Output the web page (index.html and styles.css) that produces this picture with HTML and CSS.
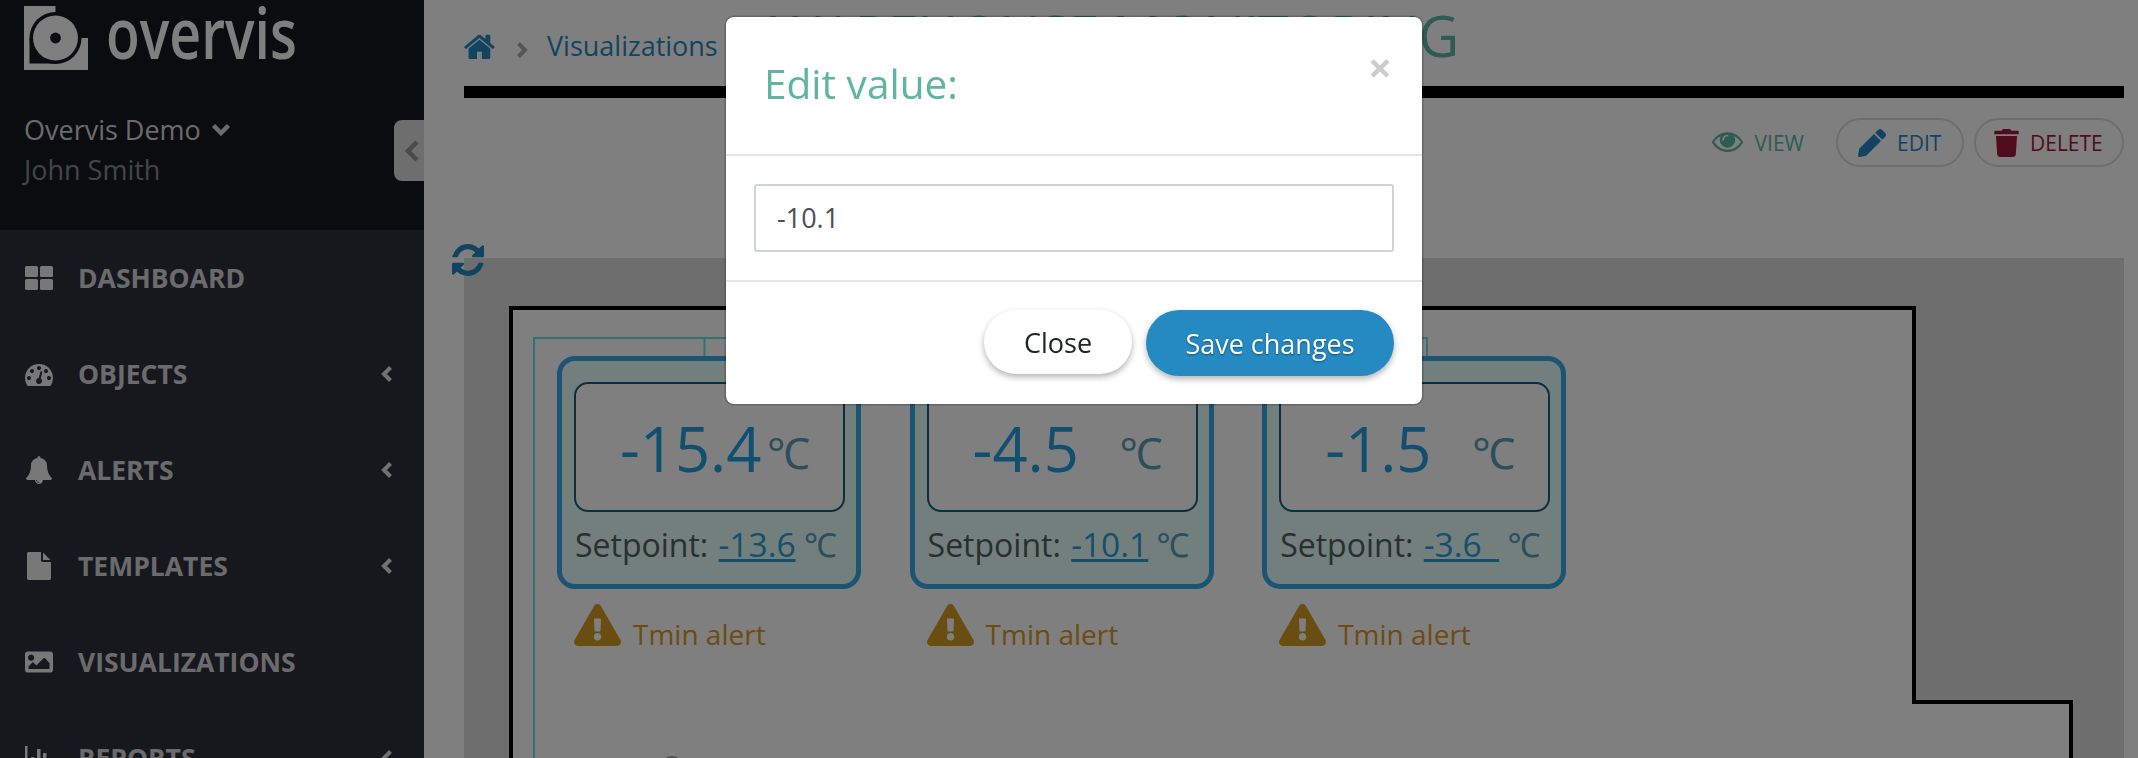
FILE: index.html
```html
<!DOCTYPE html>
<html lang="en">
<head>
    <meta charset="UTF-8">
    <meta name="viewport" content="width=device-width, initial-scale=1.0">
    <title>Warehouse Monitoring</title>
    <link rel="stylesheet" href="styles.css">
</head>
<body>
    <div class="page">
        <aside class="sidebar">
            <div class="side-head">
                <div class="logo">
                    <svg class="logo-mark" viewBox="0 0 64 64">
                        <rect width="64" height="64" fill="#fff"/>
                        <rect x="31.500" width="32.500" height="32" fill="#16181f"/>
                        <rect x="5.500" y="32" width="26" height="25.500" fill="#16181f"/>
                        <circle cx="31.500" cy="32" r="26" fill="#16181f"/>
                        <circle cx="31.500" cy="32" r="22.500" fill="#fff"/>
                        <circle cx="31.500" cy="32" r="5.400" fill="#16181f"/>
                    </svg>
                    <span class="logo-text">overvis</span>
                </div>
                <div class="org">Overvis Demo
                    <svg class="org-caret" viewBox="0 0 20 13"><polyline points="2.500,2.500 10,10 17.500,2.500"/></svg>
                </div>
                <div class="user">John Smith</div>
            </div>
            <nav class="nav">
                <a class="nav-item">
                    <svg class="nav-icon" viewBox="0 0 28 24"><rect width="13" height="11" rx="1.500"/><rect x="15" width="13" height="11" rx="1.500"/><rect y="13" width="13" height="11" rx="1.500"/><rect x="15" y="13" width="13" height="11" rx="1.500"/></svg>
                    <span>DASHBOARD</span>
                </a>
                <a class="nav-item">
                    <svg class="nav-icon" viewBox="0 192 1792 1408"><path d="M384 1152q0-53-37.500-90.500t-90.500-37.500-90.500 37.500-37.500 90.500 37.500 90.500 90.500 37.500 90.500-37.500 37.500-90.500zm192-448q0-53-37.500-90.500t-90.500-37.500-90.500 37.500-37.500 90.500 37.500 90.500 90.500 37.500 90.500-37.500 37.500-90.500zm428 481l101-382q6-26-7.500-48.500t-38.500-29.500-48 6.500-30 39.500l-101 382q-60 5-107 43.500t-63 98.500q-20 77 20 146t117 89 146-20 89-117q16-60-6-117t-72-91zm660-33q0-53-37.500-90.500t-90.500-37.500-90.500 37.500-37.500 90.500 37.500 90.500 90.500 37.500 90.500-37.500 37.500-90.500zm-640-640q0-53-37.500-90.500t-90.500-37.500-90.500 37.500-37.500 90.500 37.500 90.500 90.500 37.500 90.500-37.500 37.500-90.500zm448 192q0-53-37.500-90.500t-90.500-37.500-90.500 37.500-37.500 90.500 37.500 90.500 90.500 37.500 90.500-37.500 37.500-90.500zm320 448q0 261-141 483-19 29-54 29h-1402q-35 0-54-29-141-221-141-483 0-182 71-348t191-286 286-191 348-71 348 71 286 191 191 286 71 348z"/></svg>
                    <span>OBJECTS</span>
                    <svg class="nav-caret" viewBox="0 0 13 18"><polyline points="10.500,2.500 4,9 10.500,15.500"/></svg>
                </a>
                <a class="nav-item">
                    <svg class="nav-icon nav-icon-bell" viewBox="0 0 1792 1792"><path d="M912 1696q0-16-16-16-59 0-101.500-42.500t-42.500-101.500q0-16-16-16t-16 16q0 73 51.500 124.500t124.500 51.500q16 0 16-16zm816-288q0 52-38 90t-90 38h-448q0 106-75 181t-181 75-181-75-75-181h-448q-52 0-90-38t-38-90q50-42 91-88t85-119.500 74.500-158.500 50-206 19.500-260q0-152 117-282.500t307-158.500q-8-19-8-39 0-40 28-68t68-28 68 28 28 68q0 20-8 39 190 28 307 158.500t117 282.500q0 139 19.500 260t50 206 74.500 158.500 85 119.500 91 88z"/></svg>
                    <span>ALERTS</span>
                    <svg class="nav-caret" viewBox="0 0 13 18"><polyline points="10.500,2.500 4,9 10.500,15.500"/></svg>
                </a>
                <a class="nav-item">
                    <svg class="nav-icon nav-icon-file" viewBox="0 0 1536 1792"><path d="M1024 512v-472q22 14 36 28l408 408q14 14 28 36h-472zm-128 32q0 40 28 68t68 28h544v1056q0 40-28 68t-68 28h-1344q-40 0-68-28t-28-68v-1600q0-40 28-68t68-28h800v544z"/></svg>
                    <span>TEMPLATES</span>
                    <svg class="nav-caret" viewBox="0 0 13 18"><polyline points="10.500,2.500 4,9 10.500,15.500"/></svg>
                </a>
                <a class="nav-item">
                    <svg class="nav-icon" viewBox="0 64 512 384"><path d="M464 448H48c-26.510 0-48-21.490-48-48V112c0-26.510 21.490-48 48-48h416c26.510 0 48 21.490 48 48v288c0 26.510-21.490 48-48 48zM112 120c-30.928 0-56 25.072-56 56s25.072 56 56 56 56-25.072 56-56-25.072-56-56-56zM64 384h384V272l-87.515-87.515c-4.686-4.686-12.284-4.686-16.971 0L208 320l-55.515-55.515c-4.686-4.686-12.284-4.686-16.971 0L64 336v48z"/></svg>
                    <span>VISUALIZATIONS</span>
                </a>
                <a class="nav-item">
                    <svg class="nav-icon" viewBox="0 0 28 24"><rect width="2.500" height="24"/><rect x="6" y="11" width="3.500" height="13"/><rect x="12" y="3" width="3.500" height="21"/><rect x="18" y="7" width="3.500" height="17"/></svg>
                    <span>REPORTS</span>
                    <svg class="nav-caret" viewBox="0 0 13 18"><polyline points="10.500,2.500 4,9 10.500,15.500"/></svg>
                </a>
            </nav>
        </aside>
        <button class="side-toggle">
            <svg viewBox="0 0 16 24"><polyline points="13,3 4,12 13,21"/></svg>
        </button>

        <main class="main">
            <header class="topbar">
                <svg class="home-icon" viewBox="90 160 1620 1380"><path d="M1472 992v480q0 26-19 45t-45 19h-384v-384h-256v384h-384q-26 0-45-19t-19-45v-480q0-1 .5-3t.5-3l575-474 575 474q1 2 1 6zm223-69l-62 74q-8 9-21 11h-3q-13 0-21-7l-692-577-692 577q-12 8-24 7-13-2-21-11l-62-74q-8-10-7-23.500t11-21.500l719-599q32-26 76-26t76 26l244 204v-195q0-14 9-23t23-9h192q14 0 23 9t9 23v408l219 182q10 8 11 21.500t-7 23.500z"/></svg>
                <svg class="crumb-sep" viewBox="0 0 12 18"><polyline points="2.500,2.500 9,9 2.500,15.500"/></svg>
                <a class="crumb">Visualizations</a>
                <h1 class="title">WAREHOUSE MONITORING</h1>
            </header>

            <div class="actions">
                <a class="act act-view">
                    <svg class="act-eye" viewBox="0 320 1792 1152"><path d="M1664 960q-152-236-381-353 61 104 61 225 0 185-131.500 316.500t-316.500 131.500-316.500-131.500-131.500-316.500q0-121 61-225-229 117-381 353 133 205 333.500 326.500t434.500 121.500 434.500-121.500 333.500-326.500zm-720-384q0-20-14-34t-34-14q-125 0-214.500 89.500t-89.500 214.500q0 20 14 34t34 14 34-14 14-34q0-86 61-147t147-61q20 0 34-14t14-34zm848 384q0 34-20 69-140 230-376.500 368.500t-499.500 138.500-499.500-139-376.500-368q-20-35-20-69t20-69q140-229 376.500-368t499.500-139 499.500 139 376.500 368q20 35 20 69z"/></svg>
                    VIEW
                </a>
                <a class="act act-edit">
                    <svg class="act-pencil" viewBox="0 0 512 512"><path d="M497.900 142.100l-46.100 46.100c-4.700 4.700-12.300 4.700-17 0l-111-111c-4.700-4.700-4.700-12.300 0-17l46.100-46.100c18.700-18.700 49.100-18.700 67.900 0l60.100 60.100c18.800 18.700 18.800 49.100 0 67.900zM284.200 99.800L21.600 362.400.4 483.900c-2.900 16.400 11.400 30.600 27.800 27.800l121.500-21.300 262.600-262.600c4.700-4.700 4.700-12.300 0-17l-111-111c-4.800-4.700-12.400-4.700-17.100 0z"/></svg>
                    EDIT
                </a>
                <a class="act act-delete">
                    <svg class="act-trash" viewBox="0 0 448 512"><path d="M432 32H312l-9.400-18.700A24 24 0 0 0 281.100 0H166.800a23.720 23.720 0 0 0-21.400 13.300L136 32H16A16 16 0 0 0 0 48v32a16 16 0 0 0 16 16h416a16 16 0 0 0 16-16V48a16 16 0 0 0-16-16zM53.200 467a48 48 0 0 0 47.900 45h245.800a48 48 0 0 0 47.900-45L416 128H32z"/></svg>
                    DELETE
                </a>
            </div>

            <section class="panel">
                <svg class="refresh" viewBox="128 128 1536 1536"><path d="M1639 1056q0 5-1 7-64 268-268 434.500t-478 166.500q-146 0-282.500-55t-243.500-157l-129 129q-19 19-45 19t-45-19-19-45v-448q0-26 19-45t45-19h448q26 0 45 19t19 45-19 45l-137 137q71 66 161 102t187 36q134 0 250-65t186-179q11-17 53-117 8-23 30-23h192q13 0 22.500 9.500t9.500 22.500zm25-800v448q0 26-19 45t-45 19h-448q-26 0-45-19t-19-45 19-45l138-138q-148-137-349-137-134 0-250 65t-186 179q-11 17-53 117-8 23-30 23h-199q-13 0-22.500-9.500t-9.500-22.500v-7q65-268 270-434.500t480-166.500q146 0 284 55.500t245 156.500l130-129q19-19 45-19t45 19 19 45z"/></svg>
                <div class="plan">
                    <svg class="plan-walls" viewBox="0 0 1660 500" width="1660" height="500">
                        <polygon class="wall" points="47,50 1450,50 1450,444 1607,444 1607,520 47,520"/>
                        <polyline class="zone" points="70,520 70,80 963,80 963,100"/>
                        <line class="zone" x1="240.500" y1="80" x2="240.500" y2="100"/>
                        <ellipse class="spot" cx="208" cy="500" rx="6" ry="2"/>
                    </svg>
                    <div class="sensors">
                        <div class="sensor">
                            <div class="card">
                                <div class="reading"><span class="value">-15.4</span><span class="unit">℃</span></div>
                                <div class="setpoint">Setpoint: <a class="set-link">-13.6</a> <span class="set-unit">℃</span></div>
                            </div>
                            <div class="alert">
                                <svg class="alert-icon" viewBox="0 0 576 512"><path d="M569.517 440.013C587.975 472.007 564.806 512 527.940 512H48.054c-36.937 0-59.999-40.055-41.577-71.987L246.423 24.035c18.467-32.009 64.720-31.951 83.154 0l239.940 416.978zM288 354c-25.405 0-46 20.595-46 46s20.595 46 46 46 46-20.595 46-46-20.595-46-46-46zm-43.673-165.346l7.418 136c.347 6.364 5.609 11.346 11.982 11.346h48.546c6.373 0 11.635-4.982 11.982-11.346l7.418-136c.375-6.874-5.098-12.654-11.982-12.654h-63.383c-6.884 0-12.356 5.780-11.981 12.654z"/></svg>
                                <span class="alert-text">Tmin alert</span>
                            </div>
                        </div>
                        <div class="sensor">
                            <div class="card">
                                <div class="reading"><span class="value">-4.5</span><span class="unit">℃</span></div>
                                <div class="setpoint">Setpoint: <a class="set-link">-10.1</a> <span class="set-unit">℃</span></div>
                            </div>
                            <div class="alert">
                                <svg class="alert-icon" viewBox="0 0 576 512"><path d="M569.517 440.013C587.975 472.007 564.806 512 527.940 512H48.054c-36.937 0-59.999-40.055-41.577-71.987L246.423 24.035c18.467-32.009 64.720-31.951 83.154 0l239.940 416.978zM288 354c-25.405 0-46 20.595-46 46s20.595 46 46 46 46-20.595 46-46-20.595-46-46-46zm-43.673-165.346l7.418 136c.347 6.364 5.609 11.346 11.982 11.346h48.546c6.373 0 11.635-4.982 11.982-11.346l7.418-136c.375-6.874-5.098-12.654-11.982-12.654h-63.383c-6.884 0-12.356 5.780-11.981 12.654z"/></svg>
                                <span class="alert-text">Tmin alert</span>
                            </div>
                        </div>
                        <div class="sensor">
                            <div class="card">
                                <div class="reading"><span class="value">-1.5</span><span class="unit">℃</span></div>
                                <div class="setpoint">Setpoint: <a class="set-link">-3.6&nbsp;&nbsp;</a> <span class="set-unit">℃</span></div>
                            </div>
                            <div class="alert">
                                <svg class="alert-icon" viewBox="0 0 576 512"><path d="M569.517 440.013C587.975 472.007 564.806 512 527.940 512H48.054c-36.937 0-59.999-40.055-41.577-71.987L246.423 24.035c18.467-32.009 64.720-31.951 83.154 0l239.940 416.978zM288 354c-25.405 0-46 20.595-46 46s20.595 46 46 46 46-20.595 46-46-20.595-46-46-46zm-43.673-165.346l7.418 136c.347 6.364 5.609 11.346 11.982 11.346h48.546c6.373 0 11.635-4.982 11.982-11.346l7.418-136c.375-6.874-5.098-12.654-11.982-12.654h-63.383c-6.884 0-12.356 5.780-11.981 12.654z"/></svg>
                                <span class="alert-text">Tmin alert</span>
                            </div>
                        </div>
                    </div>
                </div>
            </section>
        </main>
    </div>

    <div class="backdrop"></div>

    <div class="modal">
        <div class="modal-head">
            <h2 class="modal-title">Edit value:</h2>
            <span class="modal-close">×</span>
        </div>
        <div class="modal-body">
            <input class="modal-input" type="text" value="-10.1">
        </div>
        <div class="modal-foot">
            <button class="btn btn-close">Close</button>
            <button class="btn btn-save">Save changes</button>
        </div>
    </div>
</body>
</html>
```

FILE: styles.css
```css
html, body {
    margin: 0;
    height: 100%;
    overflow: hidden;
}
body {
    font-family: "Open Sans", "Noto Sans", sans-serif;
    background-color: #fff;
    color: #333;
}
a {
    cursor: pointer;
}
.page {
    display: flex;
    height: 758px;
    overflow: hidden;
}

/* sidebar */
.sidebar {
    width: 424px;
    flex: none;
    background: #2e303c;
}
.side-head {
    height: 230px;
    box-sizing: border-box;
    padding: 6px 0 0 24px;
    background: #16181f;
}
.logo {
    display: flex;
    align-items: center;
    gap: 18px;
    height: 64px;
}
.logo-mark {
    width: 64px;
    height: 64px;
    flex: none;
}
.logo-text {
    margin-top: -12px;
    font-size: 70px;
    font-weight: 600;
    color: #fff;
    line-height: 64px;
    display: inline-block;
    transform: scaleX(0.79);
    transform-origin: left center;
}
.org {
    margin-top: 39px;
    font-size: 27px;
    line-height: 41px;
    color: #d5d6da;
    display: flex;
    align-items: center;
    gap: 10px;
}
.org-caret {
    width: 20px;
    height: 13px;
    fill: none;
    stroke: #d5d6da;
    stroke-width: 4.500px;
}
.user {
    font-size: 27px;
    line-height: 39px;
    color: #888a94;
}
.nav-item {
    display: flex;
    align-items: center;
    height: 96px;
    padding: 0 31px 0 25px;
    font-size: 26.500px;
    font-weight: 700;
    color: #d6d6da;
}
.nav-icon {
    width: 28px;
    height: 24px;
    margin-right: 25px;
    fill: #f0f0f0;
    flex: none;
}
.nav-icon-bell {
    height: 28px;
}
.nav-icon-file {
    height: 28px;
}
.nav-caret {
    width: 13px;
    height: 18px;
    margin-left: auto;
    fill: none;
    stroke: #e4e4e4;
    stroke-width: 4px;
}
.side-toggle {
    position: absolute;
    left: 394px;
    top: 120px;
    width: 30px;
    height: 61px;
    padding: 0;
    border: 0;
    border-radius: 8px 0 0 8px;
    background: #ddd;
}
.side-toggle svg {
    display: block;
    width: 16px;
    height: 24px;
    margin-left: 10px;
    fill: none;
    stroke: #949494;
    stroke-width: 4.500px;
}

/* main area */
.main {
    flex: 1;
    min-width: 0;
    padding: 0 14px 0 40px;
    background: #fff;
}
.topbar {
    display: flex;
    align-items: flex-start;
    height: 86px;
    border-bottom: 12px solid #000;
}
.home-icon {
    width: 31px;
    height: 26px;
    margin-top: 33px;
    fill: #2589c2;
    flex: none;
}
.crumb-sep {
    width: 12px;
    height: 18px;
    margin: 41px 0 0 21px;
    fill: none;
    stroke: #aaa;
    stroke-width: 4px;
    flex: none;
}
.crumb {
    margin: 27px 0 0 19px;
    font-size: 27px;
    line-height: 37px;
    color: #2589c2;
}
.title {
    margin: -1px 0 0 52px;
    font-size: 56px;
    line-height: 72px;
    font-weight: 400;
    letter-spacing: -1.300px;
    color: #5eb9a0;
    white-space: nowrap;
}
.actions {
    display: flex;
    justify-content: flex-end;
    align-items: center;
    gap: 10px;
    height: 49px;
    margin-top: 20px;
}
.act {
    display: flex;
    align-items: center;
    height: 49px;
    box-sizing: border-box;
    font-size: 21px;
    border-radius: 25px;
}
.act-view {
    color: #5eb9a0;
    margin-right: 22px;
}
.act-edit {
    width: 128px;
    padding-left: 20px;
    border: 2px solid #ddd;
    color: #2589c2;
}
.act-delete {
    width: 150px;
    padding-left: 18px;
    border: 2px solid #ddd;
    color: #a01838;
}
.act-eye {
    width: 31px;
    height: 22px;
    margin: 0 12px 3px -4px;
    fill: #5eb9a0;
}
.act-pencil {
    width: 28px;
    height: 28px;
    margin-right: 11px;
    fill: #2589c2;
}
.act-trash {
    width: 25px;
    height: 28px;
    margin-right: 11px;
    fill: #a01838;
}
.panel {
    position: relative;
    margin-top: 91px;
    height: 500px;
    background: #ddd;
}
.refresh {
    position: absolute;
    left: -12px;
    top: -14px;
    width: 32px;
    height: 32px;
    fill: #2589c2;
}
.plan {
    position: relative;
    height: 500px;
    overflow: hidden;
}
.plan-walls {
    position: absolute;
    left: 0;
    top: 0;
}
.wall {
    fill: #fff;
    stroke: #000;
    stroke-width: 4px;
}
.zone {
    fill: none;
    stroke: #6fe0e0;
    stroke-width: 2px;
}
.spot {
    fill: #aaa;
}
.sensors {
    position: absolute;
    left: 93px;
    top: 98px;
    display: flex;
    gap: 48.600px;
}
.sensor {
    width: 304px;
}
.card {
    height: 233px;
    box-sizing: border-box;
    padding: 21px 11px 0 12px;
    border: 5px solid #38a8e8;
    border-radius: 18px;
    background: #e6fff8;
}
.reading {
    display: flex;
    height: 130px;
    box-sizing: border-box;
    padding: 22px 0 0 44px;
    border: 2px solid #14607f;
    border-radius: 14px;
    background: #fff;
}
.value {
    width: 147px;
    font-size: 61.500px;
    line-height: 84px;
    color: #209fe0;
}
.unit {
    margin-top: 2px;
    font-size: 43px;
    line-height: 90px;
    color: #5a9cb8;
}
.setpoint {
    margin-top: 10px;
    margin-left: 1px;
    font-size: 32px;
    line-height: 44px;
    color: #50605e;
    white-space: nowrap;
}
.set-link {
    margin-left: 2px;
    font-size: 33.500px;
    color: #28a0dc;
    text-decoration: underline;
}
.set-unit {
    font-size: 33px;
    color: #5a9cb8;
}
.alert {
    display: flex;
    align-items: flex-start;
    margin: 14px 0 0 17px;
    font-size: 28px;
    color: #dc9626;
}
.alert-text {
    margin-top: 12px;
}
.alert-icon {
    width: 47px;
    height: 44px;
    margin-right: 12px;
    fill: #d49a20;
}

/* modal over the dimmed page */
.backdrop {
    position: fixed;
    inset: 0;
    background: rgba(0, 0, 0, 0.5);
}
.modal {
    position: fixed;
    left: 726px;
    top: 17px;
    width: 696px;
    height: 387px;
    background: #fff;
    border-radius: 8px;
    box-shadow: 0 0 0 1.500px rgba(0, 0, 0, 0.2);
}
.modal-head {
    position: relative;
    height: 137px;
    border-bottom: 2px solid #e5e5e5;
}
.modal-title {
    margin: 0;
    padding: 40px 0 0 38px;
    font-size: 40.600px;
    line-height: 54px;
    font-weight: 400;
    color: #5eb5a0;
}
.modal-close {
    position: absolute;
    right: 30px;
    top: 28px;
    font-size: 42px;
    line-height: 44px;
    font-weight: 700;
    color: #ccc;
}
.modal-body {
    height: 126px;
    box-sizing: border-box;
    padding: 28px 28px 0 28px;
    border-bottom: 2px solid #e5e5e5;
}
.modal-input {
    display: block;
    width: 100%;
    height: 68px;
    box-sizing: border-box;
    padding: 0 21px 2px;
    border: 2px solid #ced4da;
    border-radius: 3px;
    font-family: inherit;
    font-size: 27px;
    color: #495057;
    outline: none;
}
.modal-foot {
    display: flex;
    justify-content: flex-end;
    align-items: flex-start;
    gap: 14px;
    padding: 28px 28px 0 0;
}
.btn {
    border: 0;
    font-family: inherit;
    font-size: 27px;
    border-radius: 33px;
    cursor: pointer;
}
.btn-close {
    width: 148px;
    height: 64px;
    background: #fff;
    color: #212529;
    box-shadow: 0 3px 6px rgba(0, 0, 0, 0.3);
}
.btn-save {
    width: 248px;
    height: 66px;
    background: #2589c2;
    color: #fff;
    text-shadow: 0 1px 2px rgba(0, 0, 0, 0.4);
    box-shadow: 0 3px 6px rgba(0, 0, 0, 0.3);
}
```
